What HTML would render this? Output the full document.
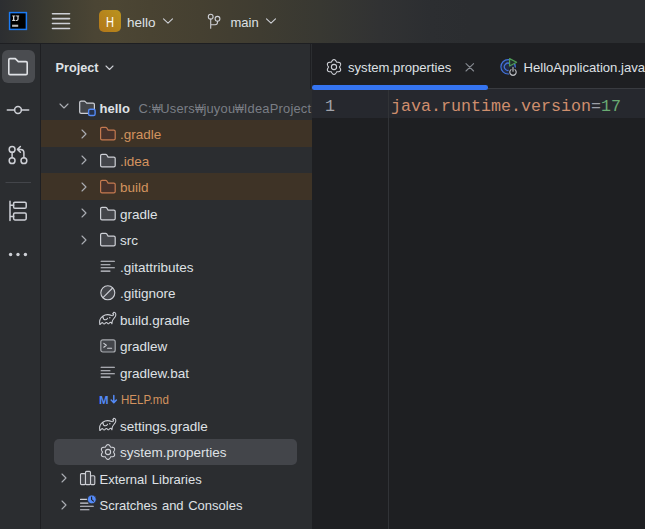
<!DOCTYPE html>
<html><head><meta charset="utf-8">
<style>
*{margin:0;padding:0;box-sizing:border-box}
html,body{width:645px;height:529px;overflow:hidden;background:#1E1F22;font-family:"Liberation Sans",sans-serif;font-size:13.5px;color:#DFE1E5}
.abs{position:absolute}
#hdr{position:absolute;left:0;top:0;width:645px;height:43px;background:#2B2D30;overflow:hidden}
#hdrg{position:absolute;left:0;top:0;width:645px;height:43px;background:linear-gradient(90deg,#2C2E31 0px,#3D3C32 50px,#4B4534 95px,#4C4634 115px,#494332 150px,#454031 200px,#3F3C31 260px,#383832 320px,#313233 380px,#2C2E31 430px,#2B2D30 470px)}
#hdrb{position:absolute;left:0;top:43px;width:645px;height:1px;background:#1E1F22}
#strip{position:absolute;left:0;top:44px;width:40px;height:485px;background:#2B2D30}
#stripb{position:absolute;left:40px;top:44px;width:1px;height:485px;background:#1E1F22}
#proj{position:absolute;left:41px;top:44px;width:271px;height:485px;background:#2B2D30}
#editor{position:absolute;left:312px;top:44px;width:333px;height:485px;background:#1E1F22}
.t{position:absolute;white-space:nowrap;line-height:16px}
svg{position:absolute;overflow:visible}
.w{display:inline-block;width:8.4px;transform:scaleX(0.72);transform-origin:0 0;text-indent:0}
</style></head><body>
<div id="hdr"><div id="hdrg"></div></div>
<div id="hdrb"></div>
<div id="strip"></div><div id="stripb"></div><div id="proj"></div><div id="editor"></div>
<svg style="left:0;top:0" width="40" height="43">
<rect x="9.6" y="12.6" width="16.8" height="16.8" fill="#000" stroke="#1C7BF4" stroke-width="1.5"/>
<path d="M12.2 15.4 H15.1 V16.3 L14.3 16.6 V19.7 L15.1 20 V20.9 H12.2 V20 L13 19.7 V16.6 L12.2 16.3 Z" fill="#D6D6D6"/>
<path d="M15.6 15.4 H19.2 V16.3 L18.6 16.6 V19.2 Q18.6 20.9 16.6 20.9 H15.6 V19.9 H16.4 Q17.4 19.9 17.4 19 V16.6 L15.6 16.3 Z" fill="#D6D6D6"/>
<rect x="12.1" y="24.7" width="6.1" height="2.1" fill="#B8B8B8"/>
</svg>
<svg style="left:0;top:0" width="645" height="43">
 <g stroke="#CED0D6" stroke-width="1.6" stroke-linecap="round">
  <line x1="52.5" y1="13.8" x2="69.5" y2="13.8"/><line x1="52.5" y1="18.6" x2="69.5" y2="18.6"/>
  <line x1="52.5" y1="23.5" x2="69.5" y2="23.5"/><line x1="52.5" y1="28.5" x2="69.5" y2="28.5"/>
 </g>
 <g fill="none" stroke="#CED0D6" stroke-width="1.1" stroke-linecap="round" stroke-linejoin="round">
  <polyline points="163.5,18.8 168,23.2 172.5,18.8"/>
  <polyline points="266.5,18.8 271,23.2 275.5,18.8"/>
  <circle cx="210.7" cy="16.7" r="2.4"/>
  <circle cx="217.5" cy="18.8" r="2.4"/>
  <path d="M210.7 19.1 V28.2 M217.5 21.2 V22.3 Q217.5 24.7 215.1 24.7 H210.7"/>
 </g>
</svg>
<div class="abs" style="left:99px;top:10px;width:22px;height:22px;border-radius:5px;background:linear-gradient(to top right,#B2761A,#BA941E)"></div>
<div class="abs" style="left:99px;top:10.5px;width:22px;height:22px;line-height:22px;text-align:center;color:#fff;font-size:15px;transform:scaleX(0.74)">H</div>
<div class="t" style="left:127px;top:15px;color:#DFE1E5;">hello</div>
<div class="t" style="left:230.5px;top:15px;color:#DFE1E5;font-size:13px">main</div>
<div class="abs" style="left:2px;top:50px;width:33px;height:33px;border-radius:6px;background:#4A4C50"></div>
<svg style="left:0;top:44px" width="40" height="485">
 <g fill="none" stroke="#DFE1E5" stroke-width="1.6" stroke-linejoin="round" stroke-linecap="round">
  <path d="M8.8 15.8 Q8.8 14.6 10 14.6 H15.3 L18.3 17.6 H26 Q27.2 17.6 27.2 18.8 V29.4 Q27.2 30.6 26 30.6 H10 Q8.8 30.6 8.8 29.4 Z"/>
 </g>
 <g fill="none" stroke="#CED0D6" stroke-width="1.5" stroke-linecap="round" stroke-linejoin="round">
  <circle cx="18" cy="66" r="3.4"/>
  <path d="M7.3 66 H14.6 M21.4 66 H28.7"/>
  <circle cx="12.1" cy="105.4" r="2.9"/>
  <circle cx="12.1" cy="116.7" r="2.9"/>
  <circle cx="23.9" cy="116.7" r="2.9"/>
  <path d="M12.1 108.3 V113.8 M23.9 113.8 V108.8 Q23.9 105.4 20.6 105.4 H17.6 M20.4 102.5 L17.5 105.4 L20.4 108.3"/>
  <path d="M10 157.2 V176.6 M10 161.2 H13.6 M10 172.4 H13.6"/>
  <rect x="13.6" y="158.2" width="12.6" height="6" rx="1.3"/>
  <rect x="13.6" y="168.9" width="12.6" height="7" rx="1.3"/>
 </g>
 <rect x="5.5" y="138" width="25.5" height="1" fill="#43454A"/>
 <g fill="#CED0D6"><circle cx="10.6" cy="210.5" r="1.7"/><circle cx="18" cy="210.5" r="1.7"/><circle cx="25.4" cy="210.5" r="1.7"/></g>
</svg>
<div class="abs" style="left:41px;top:120.0px;width:271px;height:26.5px;background:#3E3326"></div>
<div class="abs" style="left:41px;top:173.0px;width:271px;height:26.5px;background:#3E3326"></div>
<div class="abs" style="left:54px;top:439px;width:243px;height:26px;border-radius:5px;background:#43454A"></div>
<div class="t" style="left:55.5px;top:60px;color:#DFE1E5;font-weight:bold;font-size:12.7px">Project</div>
<svg style="left:105px;top:64.5px" width="10" height="7"><polyline points="1,1 4.5,4.5 8,1" fill="none" stroke="#CED0D6" stroke-width="1.1" stroke-linecap="round" stroke-linejoin="round"/></svg>
<svg style="left:58.5px;top:103.0px" width="11" height="7"><polyline points="1,1 5,5 9,1" fill="none" stroke="#ABAEB4" stroke-width="1.1" stroke-linecap="round" stroke-linejoin="round"/></svg>
<svg style="left:78px;top:99.5px" width="20" height="18"><path d="M1.7 2.6 Q1.7 1.2 3.1 1.2 H6.3 Q7 1.2 7.5 1.8 L8.7 3.1 H15 Q16.4 3.1 16.4 4.5 V12 Q16.4 13.3 15 13.3 H3.1 Q1.7 13.3 1.7 12 Z" fill="#43454A" stroke="#CED0D6" stroke-width="1.2" stroke-linejoin="round"/><rect x="10.6" y="9.2" width="6.5" height="6.3" rx="1.6" fill="#25324D" stroke="#548AF7" stroke-width="1.4"/></svg>
<div class="t" style="left:99.5px;top:100.5px;color:#DFE1E5;font-weight:bold;font-size:13px">hello</div>
<div class="abs" style="left:41px;top:93.5px;width:271px;height:26.5px;overflow:hidden"><div class="t" style="left:97.5px;top:7.6px;color:#7A7E85;font-size:12.9px;letter-spacing:0.22px">C:<span class=w>&#8361;</span>Users<span class=w>&#8361;</span>juyou<span class=w>&#8361;</span>IdeaProject</div></div>
<svg style="left:80.5px;top:128.5px" width="8" height="10"><polyline points="1,1 5,5 1,9" fill="none" stroke="#ABAEB4" stroke-width="1.1" stroke-linecap="round" stroke-linejoin="round"/></svg>
<svg style="left:99px;top:126.0px" width="18" height="16"><path d="M1.6 2.75 Q1.6 1.35 3 1.35 H6.6 Q7.3 1.35 7.8 1.95 L9.1 4.15 H14.8 Q16.2 4.15 16.2 5.55 V12.45 Q16.2 13.85 14.8 13.85 H3 Q1.6 13.85 1.6 12.45 Z" fill="#47312A" stroke="#C57A50" stroke-width="1.2" stroke-linejoin="round"/></svg>
<div class="t" style="left:120px;top:127.0px;color:#D3935F;">.gradle</div>
<svg style="left:80.5px;top:155.0px" width="8" height="10"><polyline points="1,1 5,5 1,9" fill="none" stroke="#ABAEB4" stroke-width="1.1" stroke-linecap="round" stroke-linejoin="round"/></svg>
<svg style="left:99px;top:152.5px" width="18" height="16"><path d="M1.6 2.75 Q1.6 1.35 3 1.35 H6.6 Q7.3 1.35 7.8 1.95 L9.1 4.15 H14.8 Q16.2 4.15 16.2 5.55 V12.45 Q16.2 13.85 14.8 13.85 H3 Q1.6 13.85 1.6 12.45 Z" fill="#43454A" stroke="#CED0D6" stroke-width="1.2" stroke-linejoin="round"/></svg>
<div class="t" style="left:120px;top:153.5px;color:#D3935F;">.idea</div>
<svg style="left:80.5px;top:181.5px" width="8" height="10"><polyline points="1,1 5,5 1,9" fill="none" stroke="#ABAEB4" stroke-width="1.1" stroke-linecap="round" stroke-linejoin="round"/></svg>
<svg style="left:99px;top:179.0px" width="18" height="16"><path d="M1.6 2.75 Q1.6 1.35 3 1.35 H6.6 Q7.3 1.35 7.8 1.95 L9.1 4.15 H14.8 Q16.2 4.15 16.2 5.55 V12.45 Q16.2 13.85 14.8 13.85 H3 Q1.6 13.85 1.6 12.45 Z" fill="#47312A" stroke="#C57A50" stroke-width="1.2" stroke-linejoin="round"/></svg>
<div class="t" style="left:120px;top:180.0px;color:#D3935F;">build</div>
<svg style="left:80.5px;top:208.0px" width="8" height="10"><polyline points="1,1 5,5 1,9" fill="none" stroke="#ABAEB4" stroke-width="1.1" stroke-linecap="round" stroke-linejoin="round"/></svg>
<svg style="left:99px;top:205.5px" width="18" height="16"><path d="M1.6 2.75 Q1.6 1.35 3 1.35 H6.6 Q7.3 1.35 7.8 1.95 L9.1 4.15 H14.8 Q16.2 4.15 16.2 5.55 V12.45 Q16.2 13.85 14.8 13.85 H3 Q1.6 13.85 1.6 12.45 Z" fill="#43454A" stroke="#CED0D6" stroke-width="1.2" stroke-linejoin="round"/></svg>
<div class="t" style="left:120px;top:206.5px;color:#DFE1E5;">gradle</div>
<svg style="left:80.5px;top:234.5px" width="8" height="10"><polyline points="1,1 5,5 1,9" fill="none" stroke="#ABAEB4" stroke-width="1.1" stroke-linecap="round" stroke-linejoin="round"/></svg>
<svg style="left:99px;top:232.0px" width="18" height="16"><path d="M1.6 2.75 Q1.6 1.35 3 1.35 H6.6 Q7.3 1.35 7.8 1.95 L9.1 4.15 H14.8 Q16.2 4.15 16.2 5.55 V12.45 Q16.2 13.85 14.8 13.85 H3 Q1.6 13.85 1.6 12.45 Z" fill="#43454A" stroke="#CED0D6" stroke-width="1.2" stroke-linejoin="round"/></svg>
<div class="t" style="left:120px;top:233.0px;color:#DFE1E5;">src</div>
<svg style="left:99px;top:252.5px" width="18" height="20"><g stroke="#CED0D6" stroke-width="1.1" stroke-linecap="round"><path d="M2.1 8.2 H15.4 M2.1 11.7 H11 M2.1 14.8 H15.4 M2.1 18.1 H11"/></g></svg>
<div class="t" style="left:120px;top:259.5px;color:#DFE1E5;">.gitattributes</div>
<svg style="left:99px;top:279.0px" width="18" height="22"><circle cx="8.8" cy="13.8" r="7" fill="#43454A" stroke="#CED0D6" stroke-width="1.1"/><path d="M4 18.6 L13.6 9" stroke="#CED0D6" stroke-width="1.1"/></svg>
<div class="t" style="left:120px;top:286.0px;color:#DFE1E5;">.gitignore</div>
<svg style="left:97px;top:309.0px" width="22" height="22"><path d="M2.8 15.4 C2.2 12.4 3.4 9 5.8 7.2 C8.4 5.4 12 5.4 14.6 6.6 C15.9 6.9 16.9 6.1 16.6 5 C16.4 4.3 15.7 4.3 15.6 4.9 M16.3 3.4 C18 2.9 19.2 4.6 18.7 6.6 C18.2 8.4 15.9 10.2 15.3 12.2 L14.9 14.8 Q14.2 12.8 12.8 13.6 Q11.8 15.4 10.6 14.3 Q9.4 12.9 8.3 14.2 Q7.1 15.6 6 14.2 Q5 13 4 14.4 Q3.4 15.4 2.8 15.4 M5.9 7.6 C6 9.6 6.8 10.8 8.6 10.8 C9.6 10.7 10.2 10 10.5 9.2" fill="none" stroke="#CED0D6" stroke-width="1.05" stroke-linejoin="round" stroke-linecap="round"/><circle cx="12.8" cy="8.8" r="0.75" fill="#CED0D6"/></svg>
<div class="t" style="left:120px;top:312.5px;color:#DFE1E5;">build.gradle</div>
<svg style="left:99px;top:332.0px" width="18" height="22"><rect x="1.8" y="7.8" width="14.4" height="12.2" rx="2" fill="#43454A" stroke="#A8ABB0" stroke-width="1.2"/><path d="M4.8 11.4 L7.3 13.3 L4.8 15.2 M8.6 16.2 H12.6" fill="none" stroke="#CED0D6" stroke-width="1.1" stroke-linecap="round" stroke-linejoin="round"/></svg>
<div class="t" style="left:120px;top:339.0px;color:#DFE1E5;">gradlew</div>
<svg style="left:99px;top:358.5px" width="18" height="20"><g stroke="#CED0D6" stroke-width="1.1" stroke-linecap="round"><path d="M2.1 8.2 H15.4 M2.1 11.7 H11 M2.1 14.8 H15.4 M2.1 18.1 H11"/></g></svg>
<div class="t" style="left:120px;top:365.5px;color:#DFE1E5;">gradlew.bat</div>
<div class="t" style="left:99px;top:392.2px;color:#548AF7;font-weight:bold;font-size:10.6px;transform:scaleX(1.08);transform-origin:0 0">M</div>
<svg style="left:109px;top:385.0px" width="10" height="24"><path d="M4.8 10.6 V17.6 M2.2 15 L4.8 17.7 L7.4 15" fill="none" stroke="#548AF7" stroke-width="1.5" stroke-linecap="round" stroke-linejoin="round"/></svg>
<div class="t" style="left:120.5px;top:392.0px;color:#D3935F;font-size:12.8px;transform:scaleX(0.9);transform-origin:0 0">HELP.md</div>
<svg style="left:97px;top:415.0px" width="22" height="22"><path d="M2.8 15.4 C2.2 12.4 3.4 9 5.8 7.2 C8.4 5.4 12 5.4 14.6 6.6 C15.9 6.9 16.9 6.1 16.6 5 C16.4 4.3 15.7 4.3 15.6 4.9 M16.3 3.4 C18 2.9 19.2 4.6 18.7 6.6 C18.2 8.4 15.9 10.2 15.3 12.2 L14.9 14.8 Q14.2 12.8 12.8 13.6 Q11.8 15.4 10.6 14.3 Q9.4 12.9 8.3 14.2 Q7.1 15.6 6 14.2 Q5 13 4 14.4 Q3.4 15.4 2.8 15.4 M5.9 7.6 C6 9.6 6.8 10.8 8.6 10.8 C9.6 10.7 10.2 10 10.5 9.2" fill="none" stroke="#CED0D6" stroke-width="1.05" stroke-linejoin="round" stroke-linecap="round"/><circle cx="12.8" cy="8.8" r="0.75" fill="#CED0D6"/></svg>
<div class="t" style="left:120px;top:418.5px;color:#DFE1E5;">settings.gradle</div>
<svg style="left:98px;top:441.5px" width="20" height="20"><path d="M15.50 10.00 L15.64 9.70 L15.81 9.39 L16.01 9.05 L16.20 8.68 L16.38 8.29 L16.53 7.88 L16.61 7.46 L16.63 7.05 L16.56 6.66 L16.41 6.30 L16.17 5.99 L15.87 5.74 L15.50 5.54 L15.10 5.41 L14.67 5.33 L14.24 5.29 L13.83 5.27 L13.43 5.27 L13.08 5.26 L12.75 5.24 L12.56 4.97 L12.38 4.66 L12.18 4.32 L11.96 3.97 L11.71 3.62 L11.43 3.29 L11.11 3.00 L10.76 2.79 L10.39 2.65 L10.00 2.60 L9.61 2.65 L9.24 2.79 L8.89 3.00 L8.57 3.29 L8.29 3.62 L8.04 3.97 L7.82 4.32 L7.62 4.66 L7.44 4.97 L7.25 5.24 L6.92 5.26 L6.57 5.27 L6.17 5.27 L5.76 5.29 L5.33 5.33 L4.90 5.41 L4.50 5.54 L4.13 5.74 L3.83 5.99 L3.59 6.30 L3.44 6.66 L3.37 7.05 L3.39 7.46 L3.47 7.88 L3.62 8.29 L3.80 8.68 L3.99 9.05 L4.19 9.39 L4.36 9.70 L4.50 10.00 L4.36 10.30 L4.19 10.61 L3.99 10.95 L3.80 11.32 L3.62 11.71 L3.47 12.12 L3.39 12.54 L3.37 12.95 L3.44 13.34 L3.59 13.70 L3.83 14.01 L4.13 14.26 L4.50 14.46 L4.90 14.59 L5.33 14.67 L5.76 14.71 L6.17 14.73 L6.57 14.73 L6.92 14.74 L7.25 14.76 L7.44 15.03 L7.62 15.34 L7.82 15.68 L8.04 16.03 L8.29 16.38 L8.57 16.71 L8.89 17.00 L9.24 17.21 L9.61 17.35 L10.00 17.40 L10.39 17.35 L10.76 17.21 L11.11 17.00 L11.43 16.71 L11.71 16.38 L11.96 16.03 L12.18 15.68 L12.38 15.34 L12.56 15.03 L12.75 14.76 L13.08 14.74 L13.43 14.73 L13.83 14.73 L14.24 14.71 L14.67 14.67 L15.10 14.59 L15.50 14.46 L15.87 14.26 L16.17 14.01 L16.41 13.70 L16.56 13.34 L16.63 12.95 L16.61 12.54 L16.53 12.12 L16.38 11.71 L16.20 11.32 L16.01 10.95 L15.81 10.61 L15.64 10.30 Z" fill="none" stroke="#CED0D6" stroke-width="1.1" stroke-linejoin="round"/><circle cx="10" cy="10" r="2.6" fill="none" stroke="#CED0D6" stroke-width="1.1"/></svg>
<div class="t" style="left:120px;top:445.0px;color:#DFE1E5;">system.properties</div>
<svg style="left:60.8px;top:473.0px" width="8" height="10"><polyline points="1,1 5,5 1,9" fill="none" stroke="#ABAEB4" stroke-width="1.1" stroke-linecap="round" stroke-linejoin="round"/></svg>
<svg style="left:78px;top:464.5px" width="20" height="24"><g fill="#43454A" stroke="#CED0D6" stroke-width="1.1" stroke-linejoin="round"><rect x="2.5" y="8.6" width="5" height="11" rx="1"/><rect x="12.5" y="10.8" width="4.3" height="8.8" rx="1"/><rect x="7.5" y="6.4" width="5" height="13.2" rx="1"/></g></svg>
<div class="t" style="left:99.5px;top:471.5px;color:#DFE1E5;font-size:13px;word-spacing:1px">External Libraries</div>
<svg style="left:60.8px;top:499.5px" width="8" height="10"><polyline points="1,1 5,5 1,9" fill="none" stroke="#ABAEB4" stroke-width="1.1" stroke-linecap="round" stroke-linejoin="round"/></svg>
<svg style="left:78px;top:491.0px" width="22" height="24"><g stroke="#CED0D6" stroke-width="1.1" stroke-linecap="round"><path d="M2.5 8.4 H9 M2.5 12.1 H10 M2.5 15.3 H15.3 M2.5 18.7 H11"/></g><circle cx="13.8" cy="8.4" r="4.4" fill="#548AF7" stroke="#2B2D30" stroke-width="0.8"/><path d="M13.6 6 V8.6 L15.4 10.2" fill="none" stroke="#1E1F22" stroke-width="1.1" stroke-linecap="round"/></svg>
<div class="t" style="left:99.5px;top:498.0px;color:#DFE1E5;font-size:13px;word-spacing:1px">Scratches and Consoles</div>
<div class="abs" style="left:310px;top:44px;width:1px;height:45px;background:#1E1F22"></div>
<div class="abs" style="left:312px;top:88px;width:333px;height:1px;background:#393B40"></div>
<div class="abs" style="left:312px;top:89px;width:333px;height:29px;background:#26282E"></div>
<div class="abs" style="left:388px;top:89px;width:1px;height:440px;background:#313337"></div>
<div class="abs" style="left:312px;top:85px;width:176px;height:4.6px;border-radius:2.3px;background:#3574F0"></div>
<svg style="left:324px;top:57px" width="20" height="20"><path d="M15.50 10.00 L15.64 9.70 L15.81 9.39 L16.01 9.05 L16.20 8.68 L16.38 8.29 L16.53 7.88 L16.61 7.46 L16.63 7.05 L16.56 6.66 L16.41 6.30 L16.17 5.99 L15.87 5.74 L15.50 5.54 L15.10 5.41 L14.67 5.33 L14.24 5.29 L13.83 5.27 L13.43 5.27 L13.08 5.26 L12.75 5.24 L12.56 4.97 L12.38 4.66 L12.18 4.32 L11.96 3.97 L11.71 3.62 L11.43 3.29 L11.11 3.00 L10.76 2.79 L10.39 2.65 L10.00 2.60 L9.61 2.65 L9.24 2.79 L8.89 3.00 L8.57 3.29 L8.29 3.62 L8.04 3.97 L7.82 4.32 L7.62 4.66 L7.44 4.97 L7.25 5.24 L6.92 5.26 L6.57 5.27 L6.17 5.27 L5.76 5.29 L5.33 5.33 L4.90 5.41 L4.50 5.54 L4.13 5.74 L3.83 5.99 L3.59 6.30 L3.44 6.66 L3.37 7.05 L3.39 7.46 L3.47 7.88 L3.62 8.29 L3.80 8.68 L3.99 9.05 L4.19 9.39 L4.36 9.70 L4.50 10.00 L4.36 10.30 L4.19 10.61 L3.99 10.95 L3.80 11.32 L3.62 11.71 L3.47 12.12 L3.39 12.54 L3.37 12.95 L3.44 13.34 L3.59 13.70 L3.83 14.01 L4.13 14.26 L4.50 14.46 L4.90 14.59 L5.33 14.67 L5.76 14.71 L6.17 14.73 L6.57 14.73 L6.92 14.74 L7.25 14.76 L7.44 15.03 L7.62 15.34 L7.82 15.68 L8.04 16.03 L8.29 16.38 L8.57 16.71 L8.89 17.00 L9.24 17.21 L9.61 17.35 L10.00 17.40 L10.39 17.35 L10.76 17.21 L11.11 17.00 L11.43 16.71 L11.71 16.38 L11.96 16.03 L12.18 15.68 L12.38 15.34 L12.56 15.03 L12.75 14.76 L13.08 14.74 L13.43 14.73 L13.83 14.73 L14.24 14.71 L14.67 14.67 L15.10 14.59 L15.50 14.46 L15.87 14.26 L16.17 14.01 L16.41 13.70 L16.56 13.34 L16.63 12.95 L16.61 12.54 L16.53 12.12 L16.38 11.71 L16.20 11.32 L16.01 10.95 L15.81 10.61 L15.64 10.30 Z" fill="none" stroke="#CED0D6" stroke-width="1.1" stroke-linejoin="round"/><circle cx="10" cy="10" r="2.6" fill="none" stroke="#CED0D6" stroke-width="1.1"/></svg>
<div class="t" style="left:348px;top:60px;color:#DFE1E5;font-size:13.1px">system.properties</div>
<svg style="left:464px;top:62px" width="12" height="10"><path d="M2 1.6 L9.6 9 M9.6 1.6 L2 9" stroke="#868A91" stroke-width="1.1" stroke-linecap="round"/></svg>
<svg style="left:497px;top:55px" width="24" height="24">
<circle cx="11.1" cy="11.8" r="7.2" fill="#222C44" stroke="#4272DB" stroke-width="1.2"/>
<path d="M13.5 9.2 A3.6 3.6 0 1 0 13.5 14.4" fill="none" stroke="#4272DB" stroke-width="1.2"/>
<path d="M12.6 3.6 V11 L19.6 7.3 Z" fill="#22302A" stroke="#4E9A55" stroke-width="1.2" stroke-linejoin="round"/>
<circle cx="16" cy="16.6" r="4.6" fill="#1E1F22"/>
<path d="M14 14.6 A3.2 3.2 0 1 0 18 14.6" fill="none" stroke="#B9BBC0" stroke-width="1.2" stroke-linecap="round"/>
<path d="M16 12.6 V16.2" stroke="#B9BBC0" stroke-width="1.2" stroke-linecap="round"/>
</svg>
<div class="t" style="left:523.5px;top:60px;color:#DFE1E5;font-size:13.1px">HelloApplication.java</div>
<div class="t" style="left:325px;top:97px;font:16.66px/20px 'Liberation Mono',monospace;color:#A1A3AB">1</div>
<div class="t" style="left:391px;top:97px;font:16.66px/20px 'Liberation Mono',monospace;color:#CF8E6D">java.runtime.version<span style="color:#9DA0A8">=</span><span style="color:#6AAB73">17</span></div>
</body></html>
